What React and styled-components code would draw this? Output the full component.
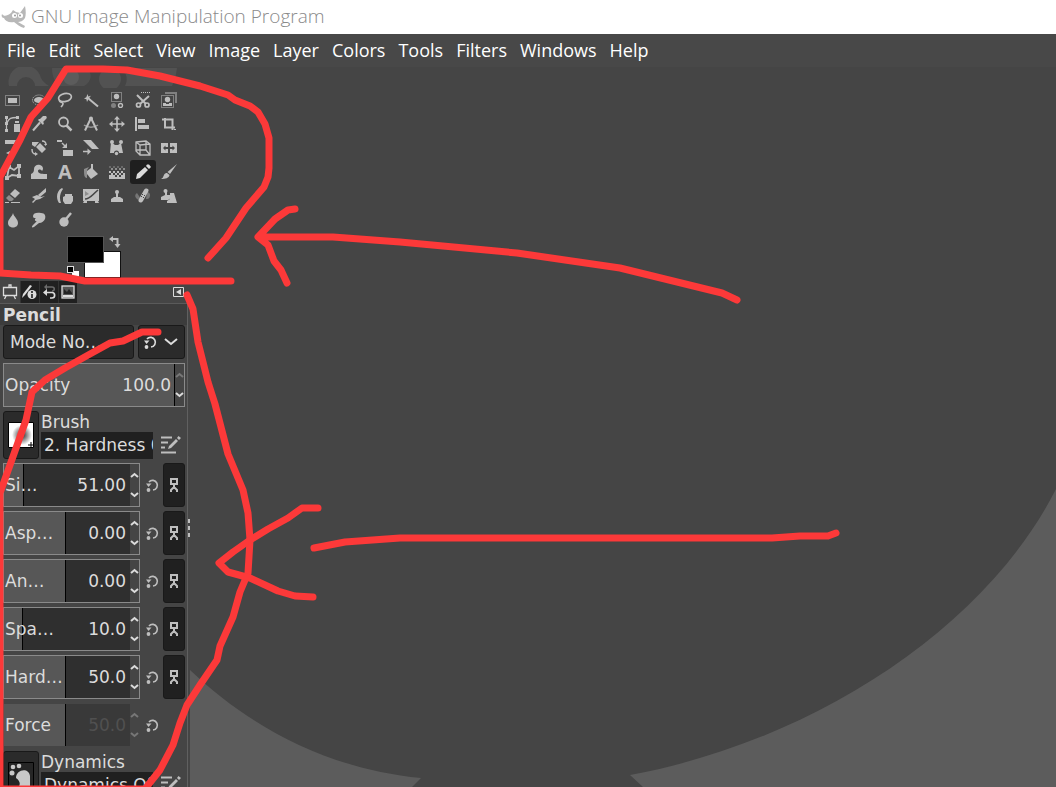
import React from "react";
import styled, { createGlobalStyle } from "styled-components";

const menus = ["File", "Edit", "Select", "View", "Image", "Layer", "Colors", "Tools", "Filters", "Windows", "Help"];

const sliders = [
  { name: "Size", label: "Si…", value: "51.00", fill: 16 },
  { name: "Aspect Ratio", label: "Asp…", value: "0.00", fill: 49 },
  { name: "Angle", label: "An…", value: "0.00", fill: 49 },
  { name: "Spacing", label: "Spa…", value: "10.0", fill: 15 },
  { name: "Hardness", label: "Hard…", value: "50.0", fill: 49 },
  { name: "Force", label: "Force", value: "50.0", fill: 49, disabled: true },
];

// every tool glyph is drawn on a 16x16 grid, filled unless it says otherwise
const line = { fill: "none", stroke: "currentColor", strokeWidth: 2 };
const thin = { fill: "none", stroke: "currentColor", strokeWidth: 1 };
const dots = { ...thin, strokeDasharray: "1 1" };

const tools = [
  { name: "Rectangle Select", art: <><rect x="0.5" y="3.5" width="14" height="10" {...dots} /><rect x="3" y="6" width="9" height="5" /></> },
  { name: "Ellipse Select", art: <><ellipse cx="8" cy="8" rx="6.5" ry="5" {...dots} /><ellipse cx="8" cy="8" rx="5" ry="3" /></> },
  { name: "Free Select", art: <><ellipse cx="8" cy="5.5" rx="6.5" ry="4" transform="rotate(-12 8 5.5)" {...thin} strokeWidth="1.7" /><path d="M2.5 8c-.5 3 3 1.500 3.500 3.500 .3 1.500-1 2.500-2 3.500" {...thin} strokeWidth="1.7" /></> },
  { name: "Fuzzy Select", art: <><path d="M4.500 2l.8 2.400 2.700-.6-1.700 2 1.600 2.200-2.600-.4L4 10l-.6-2.700L1 6.500l2.300-1.200z" /><path d="M6 7l9 7.500" {...line} /></> },
  { name: "Select by Color", art: <><rect x="2.5" y="0.5" width="10" height="9" {...dots} /><circle cx="7.5" cy="4.500" r="2.700" /><circle cx="4.500" cy="13.500" r="2.500" opacity=".5" /><circle cx="11.500" cy="13.500" r="2" {...thin} strokeWidth="1.400" /></> },
  { name: "Scissors Select", art: <><path d="M6 0.500h10" {...dots} /><path d="M2 3l9 9M14 4l-9 8" {...line} /><circle cx="3.500" cy="13" r="2" {...thin} strokeWidth="1.7" /><circle cx="12" cy="13" r="2" {...thin} strokeWidth="1.7" /></> },
  { name: "Foreground Select", art: <><path d="M4 1h11v10" {...line} opacity=".5" /><rect x="0.500" y="3.500" width="12" height="12" {...dots} /><circle cx="6.500" cy="7.500" r="2.700" /><path d="M2 14v-3h3v1h3v-1h3v3z" /></> },
  { name: "Paths", art: <><path d="M1.500 1v14M2 7C4 2 6 1.500 12 1.500" {...thin} strokeWidth="1.300" /><path d="M0 0h3v3H0zM11 0h3v3h-3zM0 6h3v3H0zM0 13h3v3H0zM10 5h4v2h-4zM9 8h6v8H9z" /></> },
  { name: "Color Picker", art: <><path d="M2 14.500l7-8" {...line} /><path d="M7 4l5 5 1-2-1-1 3-3a2 2 0 0 0-3-3L9 3 8 3z" /></> },
  { name: "Zoom", art: <><circle cx="6.500" cy="6" r="4.500" {...line} strokeWidth="1.8" /><path d="M9.500 9.500l5 5" {...line} strokeWidth="2.500" /></> },
  { name: "Measure", art: <><path d="M8 2L2 14.500M8 2l6 12.500" {...line} /><path d="M1 9c4 3 10 3 14 0" {...thin} strokeWidth="1.500" opacity=".7" /><circle cx="8" cy="2.500" r="2" /></> },
  { name: "Move", art: <><path d="M8 1v14M1 8h14" {...line} strokeWidth="1.600" /><path d="M8 0l3 3.500H5zM8 16l3-3.500H5zM0 8l3.500-3v6zM16 8l-3.500-3v6z" /></> },
  { name: "Align", art: <path d="M0 1h2v14H0zM3 3h7v4H3zM3 9h11v4H3z" /> },
  { name: "Crop", art: <><path d="M1 3.500h10.500V14M4 2v9.500h10" {...line} /><path d="M13 13.500h2" {...thin} /></> },
  { name: "Unified Transform", art: <><path d="M0 0h11l-2 4H0zM1 13l4-2v4zM5 12.500h4V15H5z" /><path d="M14 2l-3 5-3 5" {...line} /></> },
  { name: "Rotate", art: <><path d="M9 3l6 6-4 4-6-6zM1 2h7L4 7 1 5z" /><path d="M11 1c3 0 4 1 4 4M1 9c0 4 1 5 4 5" {...thin} strokeWidth="1.500" /><path d="M13 4h3l-1.500 2zM4 12l3 2-3 2z" /></> },
  { name: "Scale", art: <><path d="M0 0h5v2H0zM6 10h10v6H6zM10 3v5H5z" /><path d="M5 3l4 4" {...thin} strokeWidth="1.500" /></> },
  { name: "Shear", art: <><path d="M0 0h8l8 9H9z" /><path d="M0 11.500h5" {...line} strokeWidth="1.500" /><path d="M4.500 8.500L8 11.500 4.500 15z" /></> },
  { name: "Handle Transform", art: <><path d="M2 2l4 3h3l3-2 2 10h-4a2.500 2.500 0 0 0-5 0H1z" /><circle cx="3" cy="2" r="2" /><circle cx="12" cy="2" r="2" /><circle cx="7.500" cy="13.500" r="1.700" /></> },
  { name: "Perspective", art: <path d="M1 2l10-1 4 3v11H5l-4-4zM1 2l4 3 10-1M5 5v10M11 1v9H1M11 10l4 5" {...thin} strokeWidth="1.300" /> },
  { name: "Flip", art: <path fillRule="evenodd" d="M0 3h7v10H0zM9 3h7v10H9zM2 8l2.500-2.500V7H7v2H4.500v1.500zM14 8l-2.500-2.500V7H9v2h2.500v1.500z" /> },
  { name: "Cage Transform", art: <><path d="M4 3l5 3 5-4v10l-7-1-5 3z" {...thin} strokeWidth="1.800" /><path d="M2 1h4v4H2zM12 0h4v4h-4zM12 10h4v4h-4zM0 12h4v4H0z" /></> },
  { name: "Warp Transform", art: <path d="M0 10c2-1 3-2 3-5 0-3 3-5 6-4 3 1 4 4 2 6-1-2-4-2-4 0 0 3 5 3 9 3v5H0z" /> },
  { name: "Text" },
  { name: "Bucket Fill", art: <><path d="M4 7l4-3 2 1 5 5-7 5-4-5z" /><path d="M9 0v7" {...line} /><path d="M1 5l5-2-2 3v8c-3 0-3-4-3-9z" opacity=".6" /></> },
  { name: "Gradient", art: <><path d="M0 7h2v2H0zM4 7h2v2H4zM8 7h2v2H8zM12 7h2v2h-2zM2 9h2v2H2zM6 9h2v2H6zM10 9h2v2h-2zM14 9h2v2h-2zM0 11h6v2H0zM8 11h2v2H8zM12 11h4v2h-4zM0 13h16v2H0z" /><path d="M2 4h2v2H2zM6 4h2v2H6zM10 4h2v2h-2zM14 4h2v2h-2z" opacity=".6" /><path d="M0 2h2v2H0zM4 2h2v2H4zM8 2h2v2H8zM12 2h2v2h-2z" opacity=".3" /></> },
  { name: "Pencil", active: true, art: <path d="M1 15l1-5 8-7 3 3-8 8zM11 2l1-1.500h2L16 3l-2 2z" /> },
  { name: "Paintbrush", art: <path d="M16 0L9 10 6.500 8zM6 9l2.500 2c-.5 3-4 4-8.500 4 2-1 2-2 3-4 .7-1.400 1.600-2 3-2z" /> },
  { name: "Eraser", art: <><path d="M10 1l5 4-5 5-5-4z" /><path d="M4 7l5 4-2 2H4L1 10z" opacity=".6" /><path d="M0 14.500h4M6 14.500h9" {...thin} /></> },
  { name: "Airbrush", art: <><path d="M15 0L7 7l2 2 6-5z" /><path d="M1 9l5-2 4 2 4-1-5 3-4 1-3 3-1-1 3-3z" /></> },
  { name: "Ink", art: <><path d="M5 0C-1 3-1 11 2 15h2C2 10 3 5 6 1z" /><path d="M8 6h7v2h1v5l-2 3H8l-2-3V9l2-1z" /></> },
  { name: "MyPaint Brush", art: <><path d="M0 1h16v12H0zM1 13h3v2H0zM12 13h3l1 2h-4z" /><path d="M2 11c5 0 6-3 13-9" fill="none" stroke="#454545" strokeWidth="1.600" /><path d="M2 3v5l4-2z" fill="#454545" opacity=".4" /></> },
  { name: "Clone", art: <><circle cx="8" cy="4" r="2" /><path d="M7 5h2v4h2l3 2v3H2v-3l3-2h2z" /></> },
  { name: "Heal", art: <><path d="M2 5a3.500 3.500 0 1 0 4 6zM11 11a3.500 3.500 0 1 0 1-7z" opacity=".4" /><path d="M4 11l5-9c2-3 6-1 4 2l-5 9c-2 3-6 1-4-2z" /><path d="M7 6h1v1H7zM9 7h1v1H9zM6 8h1v1H6zM8 9h1v1H8z" fill="#454545" /></> },
  { name: "Perspective Clone", art: <><circle cx="4.500" cy="3" r="2" /><path d="M4 4h2v3h4v3l-3 2H0V9l4-2zM9 5h4l3 10H6v-2l3-2z" /></> },
  { name: "Blur", art: <path d="M8 1c1 4 5 6 5 10 0 6-10 6-10 0 0-4 4-6 5-10z" /> },
  { name: "Smudge", art: <path d="M2 4c0-3 4-4 8-3 4 0 5 3 4 6-1 2-3 4-6 4l-5 4c-2 1-3 0-1-2l4-4c-2 1-3-2-1-3-2 0-3 0-3-2z" /> },
  { name: "Dodge / Burn", art: <><circle cx="7" cy="10" r="4.700" /><path d="M9 7l5-6" {...line} strokeWidth="2.500" /></> },
];

function Glyph({ size = 16, children }) {
  return (
    <svg width={size} height={size} viewBox="0 0 16 16" fill="currentColor" aria-hidden="true">
      {children}
    </svg>
  );
}

function ResetIcon() {
  return (
    <Glyph>
      <path d="M5 5a4.800 4.800 0 1 1 4 8" {...line} strokeWidth="1.700" />
      <path d="M2 6.500h5.500L4.500 10z" />
      <circle cx="4.500" cy="13" r="1.900" />
    </Glyph>
  );
}

function EditIcon() {
  return (
    <svg width="20" height="20" viewBox="0 0 20 20" aria-hidden="true">
      <path d="M0 2.500h11M0 7.500h7M0 12.500h4M0 17.500h15" {...line} />
      <path d="M7 14l1-3 7-7 2 2-7 7zM16 3l1.500-2L20 3l-2 2z" fill="currentColor" />
    </svg>
  );
}

function Spin({ name, label, value, fill, disabled }) {
  const id = name.toLowerCase().replace(" ", "-");
  return (
    <SpinBox $disabled={disabled}>
      <SpinField $fill={fill} $disabled={disabled}>
        <label htmlFor={id}>{label}</label>
        <input id={id} aria-label={name} defaultValue={value} disabled={disabled} />
      </SpinField>
      <Steppers>
        <button aria-label={"Increase " + name} disabled={disabled || fill === 100}>
          <svg width="9" height="6" viewBox="0 0 9 6"><path d="M1 5l3.500-3L8 5" {...line} /></svg>
        </button>
        <button aria-label={"Decrease " + name} disabled={disabled}>
          <svg width="9" height="6" viewBox="0 0 9 6"><path d="M1 1l3.500 3L8 1" {...line} /></svg>
        </button>
      </Steppers>
    </SpinBox>
  );
}

function Resource({ name, value, children }) {
  return (
    <ResourceRow>
      <Preview aria-label={"Choose " + name}>{children}</Preview>
      <ResourceText>
        <label htmlFor={name}>{name}</label>
        <input id={name} defaultValue={value} />
      </ResourceText>
      <IconButton aria-label={"Edit " + name}><EditIcon /></IconButton>
    </ResourceRow>
  );
}

export default function App() {
  return (
    <Window>
      <GlobalStyle />
      <TitleBar>
        <svg width="26" height="24" viewBox="0 0 26 24" aria-hidden="true">
          <path d="M1 10c2 3 5 2 9-1l2-3 3 2 4 1 5-7c1 5 1 9 0 12-2 3-5 4-7 4l7 4-1 2c-4-1-7-4-10-6-5 1-9-1-10-4-2 0-3-2-2-4z" fill="#b8b8b8" />
          <circle cx="13.500" cy="11.500" r="2.500" fill="#fff" />
          <circle cx="19.500" cy="11.500" r="2.500" fill="#fff" />
          <circle cx="14" cy="11.500" r="1" fill="#999" />
          <circle cx="19" cy="11.500" r="1" fill="#999" />
        </svg>
        <Title>GNU Image Manipulation Program</Title>
      </TitleBar>
      <MenuBar>
        {menus.map((m) => (
          <button key={m}>{m}</button>
        ))}
      </MenuBar>

      <Body>
        <Sidebar>
          <svg width="188" height="21" viewBox="0 0 188 21" aria-hidden="true">
            <path d="M9 19a16 16 0 0 1 32-8c2 4 5 6 8 8H35a9 9 0 0 0-18 0z" fill="#525252" />
            <path d="M52 1h34c7 4 6 14-2 18H60c-5-4-8-9-8-18z" fill="#505050" />
            <circle cx="71" cy="10" r="8" fill="#5c5c5c" />
            <circle cx="110" cy="12" r="11" fill="#525252" />
            <path d="M122 1h55c-1 7-2 13-5 18h-47c3-6 2-12-3-18z" fill="#525252" />
          </svg>
          <ToolGrid>
            {tools.map((t) => (
              <Tool key={t.name} aria-label={t.name} $active={t.active}>
                {t.art ? <Glyph>{t.art}</Glyph> : "A"}
              </Tool>
            ))}
          </ToolGrid>
          <ColorArea>
            <Swatches>
              <Swatch $back aria-label="Background color" />
              <Swatch aria-label="Foreground color" />
              <SwapButton aria-label="Swap colors">
                <svg width="12" height="12" viewBox="0 0 12 12"><path d="M3 3h5.500v6" {...line} /><path d="M0 3l4-3v6zM5.500 8h6l-3 4z" fill="currentColor" /></svg>
              </SwapButton>
              <DefaultButton aria-label="Default colors">
                <svg width="12" height="12" viewBox="0 0 12 12"><rect x="5" y="5" width="7" height="7" fill="#fff" /><rect x="0.500" y="0.500" width="6" height="6" fill="#000" stroke="#ddd" /></svg>
              </DefaultButton>
            </Swatches>
          </ColorArea>

          <Tabs role="tablist">
            <Tab role="tab" aria-selected="true" aria-label="Tool Options" $active>
              <Glyph><path d="M1.500 3.500h13v8h-13zM7 3V1h2v2M4 12l-1.500 3M12 12l1.500 3" {...thin} strokeWidth="1.300" /></Glyph>
            </Tab>
            <Tab role="tab" aria-label="Device Status">
              <Glyph><path d="M0 14l1-4 7-9 2 1-7 9z" /><circle cx="10" cy="10.500" r="4.500" /><path d="M10 7v2M10 10v4" stroke="#202020" strokeWidth="1.600" /></Glyph>
            </Tab>
            <Tab role="tab" aria-label="Undo History">
              <Glyph><path d="M6 3h5c3 0 3 4 0 4" {...line} strokeWidth="1.500" opacity=".4" /><path d="M6 0v6L3 3z" opacity=".4" /><path d="M5 8.500h6c3.500 0 3.500 5.500 0 5.500H9" {...line} strokeWidth="1.700" /><path d="M6 5v7L2 8.500z" /></Glyph>
            </Tab>
            <Tab role="tab" aria-label="Images">
              <Glyph><rect x="2" y="2" width="12" height="12" fill="#555" stroke="#ddd" strokeWidth="1.300" /><path d="M4 9V5l3 3 2-3 3 4v1H4z" fill="#222" /><path d="M3 11h10v2H3z" fill="#ddd" /></Glyph>
            </Tab>
            <MenuButton aria-label="Configure this tab">
              <svg width="11" height="10" viewBox="0 0 11 10"><path d="M0.500 0.500h10v9H0.500z" {...thin} /><path d="M8 2v6L3 5z" fill="currentColor" /></svg>
            </MenuButton>
          </Tabs>

          <Panel>
            <Heading>Pencil</Heading>
            <Options>
              <ModeRow>
                <select aria-label="Mode"><option>Mode No…</option></select>
                <ModeButton aria-label="Switch mode group">
                  <ResetIcon />
                  <svg width="14" height="8" viewBox="0 0 14 8"><path d="M1 1l6 5 6-5" {...line} /></svg>
                </ModeButton>
              </ModeRow>
              <Spin name="Opacity" label="Opacity" value="100.0" fill={100} />
              <Resource name="Brush" value="2. Hardness 050">
                <svg width="26" height="26" viewBox="0 0 26 26">
                  <defs><radialGradient id="soft"><stop offset="0" stopColor="#222" /><stop offset="1" stopColor="#fff" /></radialGradient></defs>
                  <path d="M0.500 0.500h25v25h-25z" fill="#fff" stroke="#000" />
                  <circle cx="14" cy="13" r="10" fill="url(#soft)" />
                  <path d="M20 23h6M23 20v6" stroke="#000" />
                </svg>
              </Resource>
              {sliders.map((s) => (
                <SliderRow key={s.name}>
                  <Spin {...s} />
                  <IconButton aria-label={"Reset " + s.name}><ResetIcon /></IconButton>
                  {!s.disabled && (
                    <LinkButton aria-label={"Link " + s.name}>
                      <svg width="8" height="14" viewBox="0 0 8 14"><path d="M1 1h6v5H1zM4 6v4M1 14v-2l2-2h2l2 2v2" {...line} /></svg>
                    </LinkButton>
                  )}
                </SliderRow>
              ))}
              <Resource name="Dynamics" value="Dynamics Off">
                <svg width="26" height="26" viewBox="0 0 26 26">
                  <path d="M0.500 0.500h25v25h-25z" fill="#262626" stroke="#000" />
                  <g fill="#c8c8c8"><circle cx="5" cy="5" r="2.300" /><circle cx="11" cy="4" r="2.300" /><circle cx="4" cy="11" r="2.500" /><path d="M8 16c0-9 13-11 14-2v12H10c3-4 2-7-2-10z" /></g>
                </svg>
              </Resource>
            </Options>
          </Panel>
        </Sidebar>
        <Splitter role="separator"><i /><i /><i /></Splitter>
        <Canvas>
          <svg width="100%" height="100%" viewBox="190 67 866 720" preserveAspectRatio="xMinYMin slice" aria-hidden="true">
            <path d="M190 670C250 727 327 769 421 778l-9 9H190zM630 775C810 742 985 630 1056 489v298H643z" fill="#5c5c5c" />
          </svg>
        </Canvas>
      </Body>

      <Marks viewBox="0 0 1056 787" width="1056" height="787" aria-hidden="true">
        <path d="M208 258L226 238 246 208 264 187 268 177 269 168V138L265 124 258 112 250 106 235 100 228 95 200 86 160 76 127 70 103 69H66L48 98 31 117 20 140 0 177V273L31 275 60 276 85 281H231" />
        <path d="M295 209l-7 1-13 9-17 18 10 8 6 16 7 9 6 13M260 237h73l67 5 117 11 103 15 102 25 15 7" />
        <path d="M158 332h-16l-19 9-13 2-20 11-25 14-20 12-13 12-6 28-16 45-10 28v296h145l15-19 13-25 7-22 7-18 13-20 17-25 3-14 13-29 7-25 8-19 2-33-2-27-5-23-15-36-13-50-7-22-10-40-5-33-6-14" />
        <path d="M318 508h-16l-14 10-20 11-18 11-17 12-14 11 9 9 22 6 28 13 17 5 18 1M314 548l31-6 55-4h372l28-2h28l8-3" />
      </Marks>
    </Window>
  );
}

const GlobalStyle = createGlobalStyle`
  body {
    margin: 0;
    background: #454545;
  }

  *, *::before, *::after {
    box-sizing: border-box;
  }

  button, input, select {
    margin: 0;
    padding: 0;
    border: 0;
    border-radius: 0;
    background: none;
    color: inherit;
    font: inherit;
  }

  svg {
    display: block;
    flex: none;
  }
`;

const Window = styled.div`
  position: relative;
  display: flex;
  flex-direction: column;
  height: 100vh;
  overflow: hidden;
  color: #dcdcdc;
  font: 17px/20px "DejaVu Sans", sans-serif;
`;

const TitleBar = styled.header`
  display: flex;
  align-items: center;
  gap: 4px;
  flex: none;
  height: 34px;
  padding: 0 0 2px 1px;
  background: #fff;
`;

const Title = styled.h1`
  margin: 0;
  color: #8a8a8a;
  font: 300 19px/24px "Open Sans", sans-serif;
`;

const MenuBar = styled.nav`
  display: flex;
  gap: 1px;
  flex: none;
  height: 33px;
  padding: 0 0 2px 1px;
  background: #484848;

  button {
    padding: 0 6px;
    color: #fff;
    font: 18px/24px "Open Sans", sans-serif;
  }
`;

const Body = styled.div`
  display: flex;
  flex: 1;
  min-height: 0;
`;

const Sidebar = styled.aside`
  display: flex;
  flex-direction: column;
  flex: none;
  width: 188px;
  overflow: hidden;
`;

const ToolGrid = styled.div`
  display: grid;
  grid-template-columns: repeat(7, 26px);
  grid-auto-rows: 24px;
`;

const Tool = styled.button`
  display: flex;
  align-items: center;
  justify-content: center;
  border-radius: 3px;
  background: ${(p) => (p.$active ? "#1f1f1f" : "none")};
  color: ${(p) => (p.$active ? "#dcdcdc" : "#bebebe")};
  font: bold 20px/24px "Open Sans", sans-serif;
`;

const ColorArea = styled.div`
  flex: none;
  height: 49px;
  padding: 4px 0 0 67px;
`;

const Swatches = styled.div`
  position: relative;
  width: 54px;
  height: 42px;
`;

const Swatch = styled.button`
  position: absolute;
  ${(p) => (p.$back ? "right: 0; bottom: 0;" : "left: 0; top: 0;")}
  width: 37px;
  height: 27px;
  border: 1px solid ${(p) => (p.$back ? "#111" : "#555")};
  background: ${(p) => (p.$back ? "#fff" : "#000")};
`;

const SwapButton = styled.button`
  position: absolute;
  top: 0;
  right: 0;
  color: #bebebe;
`;

const DefaultButton = styled.button`
  position: absolute;
  bottom: 0;
  left: 0;
`;

const Tabs = styled.div`
  display: flex;
  flex: none;
  height: 22px;
`;

const Tab = styled.button`
  display: flex;
  align-items: center;
  justify-content: center;
  width: 20px;
  background: ${(p) => (p.$active ? "#454545" : "#202020")};

  & + & {
    width: 19px;
    border-left: 1px solid #333;
  }
`;

const MenuButton = styled.button`
  margin-left: auto;
  padding-right: 4px;
`;

const Panel = styled.section`
  flex: 1;
  min-height: 0;
  border-top: 1px solid #5a5a5a;
  border-right: 1px solid #606060;
`;

const Heading = styled.h2`
  margin: 0;
  padding: 1px 3px 0;
  background: #3c3c3c;
  font: bold 17px/20px "DejaVu Sans", sans-serif;
`;

const Options = styled.div`
  display: flex;
  flex-direction: column;
  gap: 4px;
  padding: 0 2px 0 3px;
`;

const ModeRow = styled.div`
  display: flex;
  gap: 4px;
  height: 34px;

  select {
    flex: 1;
    min-width: 0;
    padding-left: 6px;
    appearance: none;
    border: 1px solid #191919;
    border-radius: 3px;
    background: #2b2b2b;
  }
`;

const ModeButton = styled.button`
  display: flex;
  align-items: center;
  justify-content: center;
  gap: 6px;
  width: 47px;
  padding-right: 4px;
  border: 1px solid #191919;
  border-radius: 3px;
  background: #2b2b2b;
`;

const SpinBox = styled.div`
  display: flex;
  flex: none;
  height: 44px;
  border: 1px solid ${(p) => (p.$disabled ? "#454545" : "#8a8a8a")};
`;

const SpinField = styled.div`
  display: flex;
  align-items: center;
  flex: 1;
  min-width: 0;
  padding: 0 4px 0 1px;
  background: linear-gradient(
    to right,
    #575757 calc(${(p) => p.$fill}% - 1px),
    #000 calc(${(p) => p.$fill}% - 1px) ${(p) => p.$fill}%,
    ${(p) => (p.$disabled ? "#393939" : "#2f2f2f")} ${(p) => p.$fill}%
  );

  input {
    flex: 1;
    width: 0;
    min-width: 0;
    text-align: right;
  }

  input:disabled {
    color: #505050;
  }
`;

const Steppers = styled.div`
  display: flex;
  flex-direction: column;
  justify-content: space-between;
  padding: 8px 0;
  background: #454545;
  color: #dcdcdc;

  button:disabled {
    color: #777;
  }
`;

const SliderRow = styled.div`
  display: grid;
  grid-template-columns: 1fr 15px 22px;
  gap: 4px;
  align-items: center;
`;

const IconButton = styled.button`
  display: flex;
  align-items: center;
  justify-content: center;
  color: #bebebe;
`;

const LinkButton = styled(IconButton)`
  height: 44px;
  border: 1px solid #191919;
  border-radius: 3px;
  background: #202020;
`;

const ResourceRow = styled.div`
  display: flex;
  align-items: center;
  height: 48px;
  padding-right: 4px;

  > :last-child {
    margin: 20px 0 0 8px;
  }
`;

const Preview = styled.button`
  display: flex;
  align-items: center;
  justify-content: center;
  flex: none;
  width: 36px;
  height: 48px;
  border: 1px solid #191919;
  border-radius: 3px;
  background: #2b2b2b;
`;

const ResourceText = styled.div`
  display: flex;
  flex-direction: column;
  flex: 1;
  min-width: 0;
  padding-left: 2px;

  input {
    width: 100%;
    height: 27px;
    padding-left: 3px;
    background: #202020;
  }
`;

const Splitter = styled.div`
  display: flex;
  flex-direction: column;
  align-items: center;
  justify-content: center;
  gap: 3px;
  flex: none;
  width: 2px;
  padding-top: 202px;

  i {
    width: 2px;
    height: 4px;
    background: #bebebe;
  }
`;

const Canvas = styled.main`
  flex: 1;
  min-width: 0;
  background: #454545;
`;

const Marks = styled.svg`
  position: absolute;
  top: 0;
  left: 0;
  pointer-events: none;
  fill: none;
  stroke: #fc3939;
  stroke-width: 7;
  stroke-linecap: round;
  stroke-linejoin: round;
`;
